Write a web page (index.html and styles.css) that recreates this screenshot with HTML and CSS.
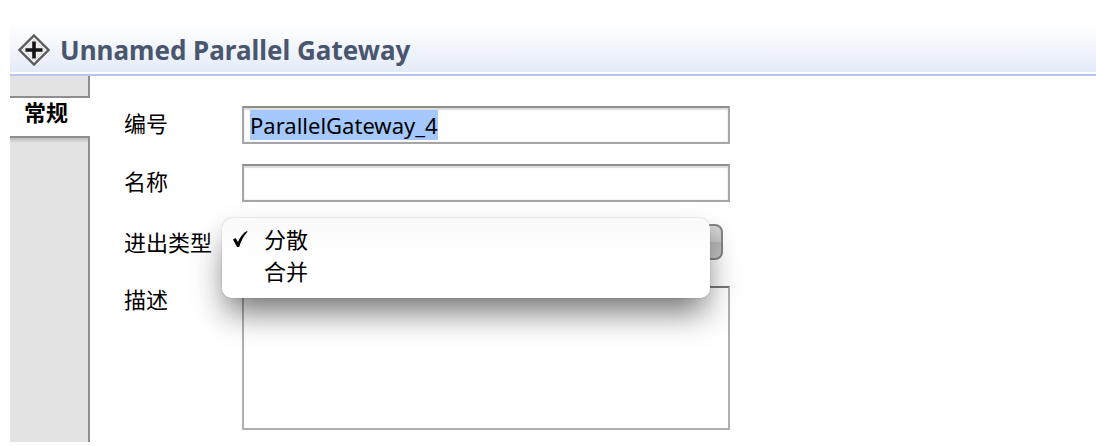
FILE: index.html
```html
<!DOCTYPE html>
<html lang="zh-CN">
<head>
<meta charset="utf-8">
<title>Unnamed Parallel Gateway</title>
<link rel="stylesheet" href="styles.css">
</head>
<body>
<main class="panel">
  <header class="panel-header">
    <svg class="gateway-icon" viewBox="0 0 32 32" aria-hidden="true">
      <path d="M16 1.5 30.5 16 16 30.5 1.5 16Z" fill="#fff" stroke="#5c5c5c" stroke-width="2.4"/>
      <path d="M16 5.2 26.800 16 16 26.800 5.200 16Z" fill="#ececec" stroke="#dcdcdc" stroke-width="1"/>
      <path d="M16 7.500v17M7.500 16h17" fill="none" stroke="#151515" stroke-width="3.6"/>
    </svg>
    <h1 class="panel-title">Unnamed Parallel Gateway</h1>
  </header>
  <div class="panel-body">
    <nav class="tabs">
      <div class="tabs-spacer"></div>
      <button class="tab" type="button">常规</button>
      <div class="tabs-rest"></div>
    </nav>
    <form class="form">
      <label class="label" for="gw-id">编号</label>
      <input class="field" id="gw-id" type="text" value="ParallelGateway_4" spellcheck="false" autofocus>
      <label class="label" for="gw-name">名称</label>
      <input class="field" id="gw-name" type="text">
      <label class="label" for="gw-type">进出类型</label>
      <div class="select-wrap">
        <select class="select" id="gw-type">
          <option selected>分散</option>
          <option>合并</option>
        </select>
        <ul class="menu" role="listbox" aria-label="进出类型">
          <li class="menu-item" role="option" aria-selected="true">
            <svg class="check" viewBox="0 0 16 18" aria-hidden="true"><path d="M1 9.5 3.5 8 6 12 C8 7 11 3 15 1 L15.5 1.8 C12 5.500 9 11 7.200 17 L5 17Z" fill="#000"/></svg>
            <span class="menu-text">分散</span>
          </li>
          <li class="menu-item" role="option" aria-selected="false">
            <span class="menu-text">合并</span>
          </li>
        </ul>
      </div>
      <label class="label label-top" for="gw-desc">描述</label>
      <textarea class="field area" id="gw-desc"></textarea>
    </form>
  </div>
</main>
<script src="main.js"></script>
</body>
</html>
```

FILE: styles.css
```css
* {
  box-sizing: border-box;
}

body {
  margin: 0;
  background: #fff;
  color: #000;
  font-family: "Noto Sans", "Noto Sans CJK SC", sans-serif;
  font-size: 22px;
}

.panel {
  display: flex;
  flex-direction: column;
  min-height: 100vh;
  padding: 24px 0 4px 10px;
}

.panel-header {
  display: flex;
  align-items: center;
  gap: 10px;
  height: 52px;
  padding: 2px 8px 0;
  border-bottom: 2px solid #b4c8ec;
  background: linear-gradient(#fff, #e4ebf8) 0 0 / 100% 48px no-repeat;
}

.gateway-icon {
  width: 32px;
  height: 32px;
  flex: none;
}

.panel-title {
  margin: 0;
  color: #4a566e;
  font-size: 26px;
  font-weight: 700;
  line-height: 36px;
}

.panel-body {
  display: flex;
  flex: 1;
}

.tabs {
  display: flex;
  flex-direction: column;
  width: 80px;
  flex: none;
}

.tabs-spacer,
.tabs-rest {
  border-right: 2px solid #8e8e8e;
  background: #e3e3e3;
}

.tabs-spacer {
  height: 20px;
}

.tabs-rest {
  flex: 1;
  box-shadow: inset 0 2px 0 #c4c4c4, inset 0 4px 0 #d4d4d4;
}

.tab {
  height: 42px;
  padding: 0 8px 10px 0;
  border: 0 solid #8e8e8e;
  border-width: 2px 0;
  background: #fff;
  color: #000;
  font-family: inherit;
  font-size: 22px;
  font-weight: 600;
  line-height: 28px;
}

.form {
  display: grid;
  flex: 1;
  grid-template-columns: 118px minmax(0, 488px);
  row-gap: 20px;
  align-content: start;
  padding: 30px 24px 0 34px;
}

.label {
  align-self: center;
  padding-bottom: 4px;
  line-height: 28px;
}

.label-top {
  align-self: start;
  line-height: 26px;
}

.field {
  width: 100%;
  height: 38px;
  margin: 0;
  padding: 0 6px;
  border: 2px solid #a6a6a6;
  border-top-color: #8e8e8e;
  border-radius: 0;
  outline: 0;
  background: #fff;
  box-shadow: inset 0 2px 1px #ddd, inset 0 0 2px #ddd;
  color: #000;
  font-family: inherit;
  font-size: 22px;
  line-height: 28px;
}

.field::selection {
  background: rgba(164, 200, 255, 0.99);
  color: #000;
}

.area {
  display: block;
  height: 144px;
  border-color: #b0b0b0;
  border-top-color: #777;
  box-shadow: none;
  resize: none;
}

.select-wrap {
  position: relative;
  height: 44px;
  padding: 2px 7px 0 0;
}

.select {
  width: 100%;
  height: 36px;
  padding: 0 8px;
  border: 2px solid #858585;
  border-radius: 8px;
  appearance: none;
  background: linear-gradient(#d6d6d6, #c6c6c6 50%, #b5b5b5 50%, #c8c8c8);
  color: #000;
  font-family: inherit;
  font-size: 22px;
}

.menu {
  position: absolute;
  z-index: 1;
  top: -4px;
  right: 20px;
  left: -20px;
  margin: 0;
  padding: 5px 0 11px;
  border-radius: 10px;
  background: linear-gradient(#fafafa, #fff 60%);
  box-shadow: 0 0 1px rgba(0, 0, 0, 0.5), 0 18px 32px -4px rgba(0, 0, 0, 0.55);
  list-style: none;
}

.menu-item {
  display: grid;
  grid-template-columns: 32px 1fr;
  align-items: center;
  padding-left: 10px;
  line-height: 32px;
}

.menu-text {
  grid-column: 2;
}

.check {
  width: 16px;
  height: 18px;
}
```

FILE: main.js
```js
const idField = document.getElementById("gw-id");
idField.focus();
idField.select();
```
